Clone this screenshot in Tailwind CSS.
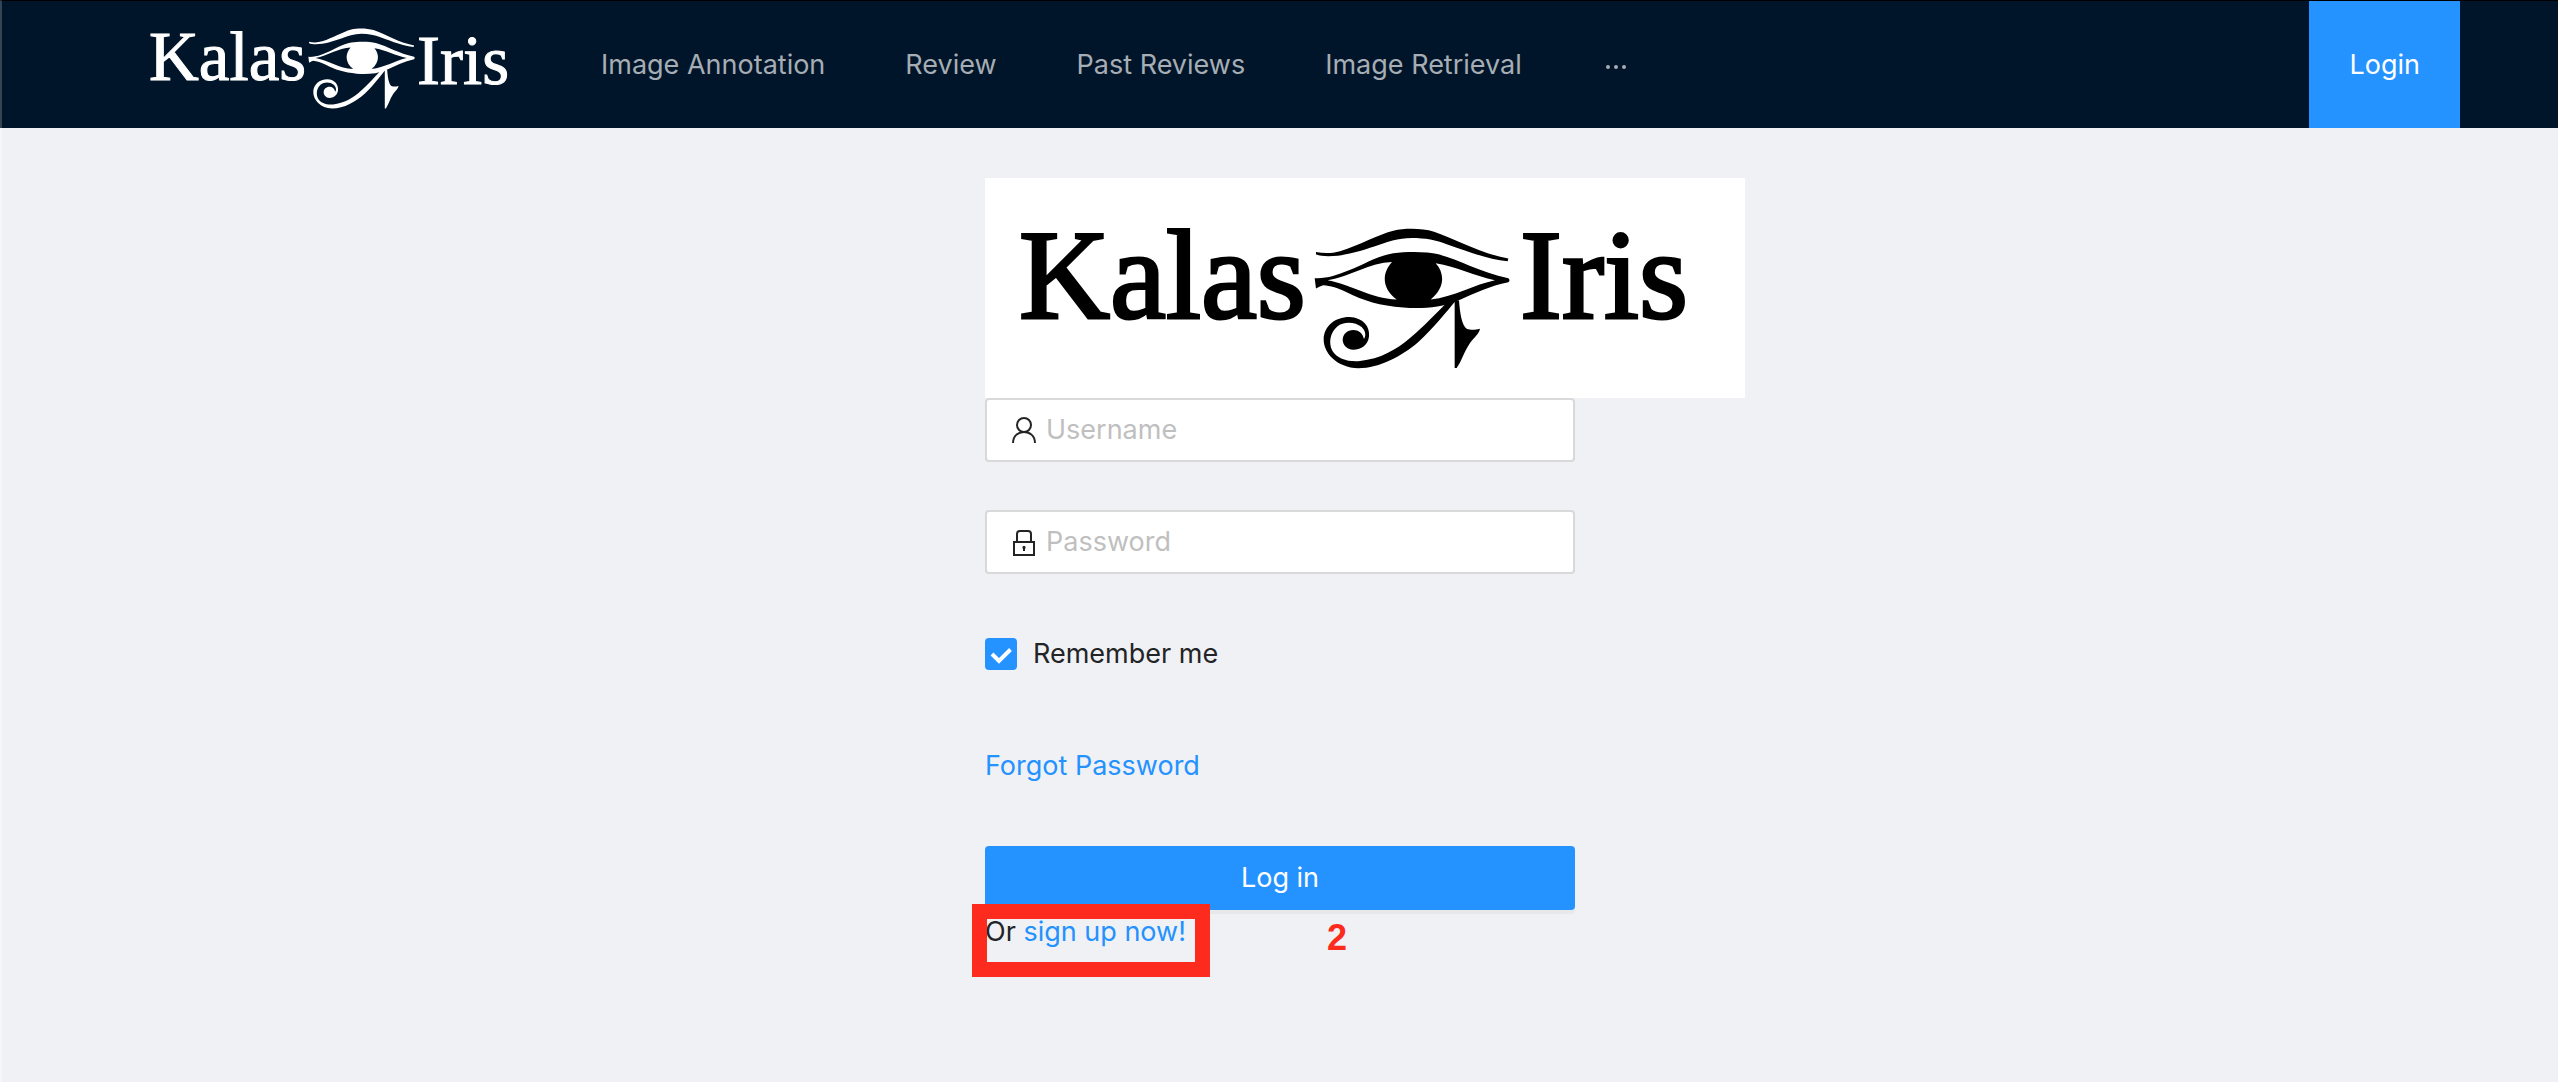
<!DOCTYPE html>
<html lang="en">
<head>
<meta charset="utf-8">
<title>Kalas Iris - Login</title>
<script src="https://cdn.jsdelivr.net/npm/@tailwindcss/browser@4"></script>
</head>
<body class="flex min-h-screen flex-col bg-[#f0f1f5] font-['Inter',sans-serif] text-[27px] leading-[44px] text-[#222426]">
<svg class="hidden" aria-hidden="true">
  <symbol id="eye" viewBox="72 54 588 424" preserveAspectRatio="none">
    <path d="M78 126C100 131 125 131 150 124C210 105 260 75 310 62C345 54 395 54 432 65C500 88 570 130 655 146L653 154C600 150 540 127 470 103C440 90 405 84 365 84C325 84 290 96 255 109C210 124 160 139 115 139C100 139 88 137 78 134Z"/>
    <path fill-rule="evenodd" d="M74 205C110 207 140 196 175 182C220 165 260 138 310 130C350 124 410 124 445 133C510 150 570 188 655 205Q662 211 655 217C600 228 555 250 505 272C450 295 390 297 340 293C270 288 220 272 170 247C145 234 120 228 100 226Q90 228 78 236ZM113 211C180 200 240 158 306 156C275 190 275 235 320 269C240 265 190 226 113 211ZM437 160C500 170 555 199 615 211C555 223 490 262 422 269C465 235 465 190 437 160Z"/>
    <path d="M498 272C470 305 430 355 385 397C335 440 270 475 205 476C140 474 100 430 101 388C102 350 135 322 178 322C220 324 240 350 237 380C234 408 210 420 190 420C170 419 158 405 158 390C159 373 172 361 190 361C205 361 218 370 222 388C228 380 228 365 215 352C195 335 160 335 142 350C120 368 115 400 127 423C142 448 175 457 210 454C270 448 320 420 360 385C400 350 440 310 468 280Z"/>
    <path d="M494 272L507 272C510 310 515 345 530 357C545 362 555 360 570 357C568 372 550 385 540 400C520 430 515 455 500 475L494 475Z"/>
  </symbol>
</svg>

<header class="flex h-32 items-stretch border-t border-l-2 border-t-black border-l-[#354454] bg-[#001529] px-[98px] text-[#a6adb4]">
  <svg class="h-[127px] w-[461px] shrink-0 fill-white stroke-white font-['Liberation_Serif',serif] text-[69px]" role="img" aria-label="Kalas Iris">
    <text x="49" y="79" stroke-width="1">Kalas</text>
    <use href="#eye" x="208" y="27" width="107" height="81" stroke="none"/>
    <text x="317" y="83" stroke-width="1">Iris</text>
  </svg>
  <nav class="flex flex-1 items-center">
    <a href="#" class="px-10">Image Annotation</a>
    <a href="#" class="px-10">Review</a>
    <a href="#" class="px-10">Past Reviews</a>
    <a href="#" class="px-10">Image Retrieval</a>
    <button type="button" aria-label="More" class="px-10">
      <svg class="h-7 w-7 fill-current" viewBox="0 0 28 28"><circle cx="6" cy="16" r="2"/><circle cx="14" cy="16" r="2"/><circle cx="22" cy="16" r="2"/></svg>
    </button>
  </nav>
  <a href="#" class="flex items-center bg-[#2492ff] px-10 text-white">Login</a>
</header>

<main class="flex-1 border-l-2 border-[#f5f6f8] pt-[50px]">
  <form class="mx-auto w-[590px]">
    <div class="h-[220px] w-[760px] bg-white">
      <svg class="h-[220px] w-[760px] fill-black stroke-black font-['Liberation_Serif',serif] text-[126px]" role="img" aria-label="Kalas Iris">
        <text x="34" y="140" stroke-width="3">Kalas</text>
        <use href="#eye" x="329" y="50" width="196" height="141" stroke="none"/>
        <text x="535" y="140" stroke-width="3">Iris</text>
      </svg>
    </div>

    <label class="mb-12 flex h-16 items-center gap-2 rounded border-2 border-[#d9d9d9] bg-white pr-5 pl-[23px]">
      <svg class="h-7 w-7 shrink-0 fill-none stroke-[#222426] stroke-2" viewBox="0 0 28 28"><circle cx="14" cy="9" r="7"/><path d="M3 27C3 20 8 16 14 16S25 20 25 27"/></svg>
      <input type="text" aria-label="Username" placeholder="Username" class="w-full min-w-0 bg-transparent outline-none placeholder:text-[#bfbfbf]">
    </label>

    <label class="mb-12 flex h-16 items-center gap-2 rounded border-2 border-[#d9d9d9] bg-white pr-5 pl-[23px]">
      <svg class="h-7 w-7 shrink-0 fill-none stroke-[#222426] stroke-2" viewBox="0 0 28 28"><path d="M4 14H24V27H4ZM7 14V6Q7 3 10 3H18Q21 3 21 6V14"/><path d="M14 18V23M12.500 19.500H15.500"/></svg>
      <input type="password" aria-label="Password" placeholder="Password" class="w-full min-w-0 bg-transparent outline-none placeholder:text-[#bfbfbf]">
    </label>

    <div class="mb-12 flex h-16 items-center">
      <label class="flex items-center gap-4">
        <span class="grid">
          <input type="checkbox" checked class="peer col-start-1 row-start-1 h-8 w-8 appearance-none rounded border-2 border-[#d9d9d9] bg-white checked:border-[#2492ff] checked:bg-[#2492ff]">
          <svg class="pointer-events-none invisible col-start-1 row-start-1 h-8 w-8 fill-none stroke-white stroke-4 peer-checked:visible" viewBox="0 0 32 32"><path d="M7 16L14 23L25.500 11.500"/></svg>
        </span>
        Remember me
      </label>
    </div>

    <div class="mb-12 flex h-16 items-center">
      <a href="#" class="text-[#2492ff]">Forgot Password</a>
    </div>

    <button type="submit" class="block h-16 w-full rounded bg-[#2492ff] text-white shadow-[0_4px_0_#e7e8ea]">Log in</button>
    <div class="relative">
      Or <a href="#" class="text-[#2492ff]">sign up now!</a>
      <div class="pointer-events-none absolute -top-1.5 -left-[13px] h-[73px] w-[238px] border-[15px] border-[#fd2b1d]"></div>
      <span class="absolute top-1.5 left-[342px] font-['Liberation_Sans',sans-serif] text-[36px] font-bold text-[#fd2b1d]">2</span>
    </div>
  </form>
</main>
</body>
</html>
